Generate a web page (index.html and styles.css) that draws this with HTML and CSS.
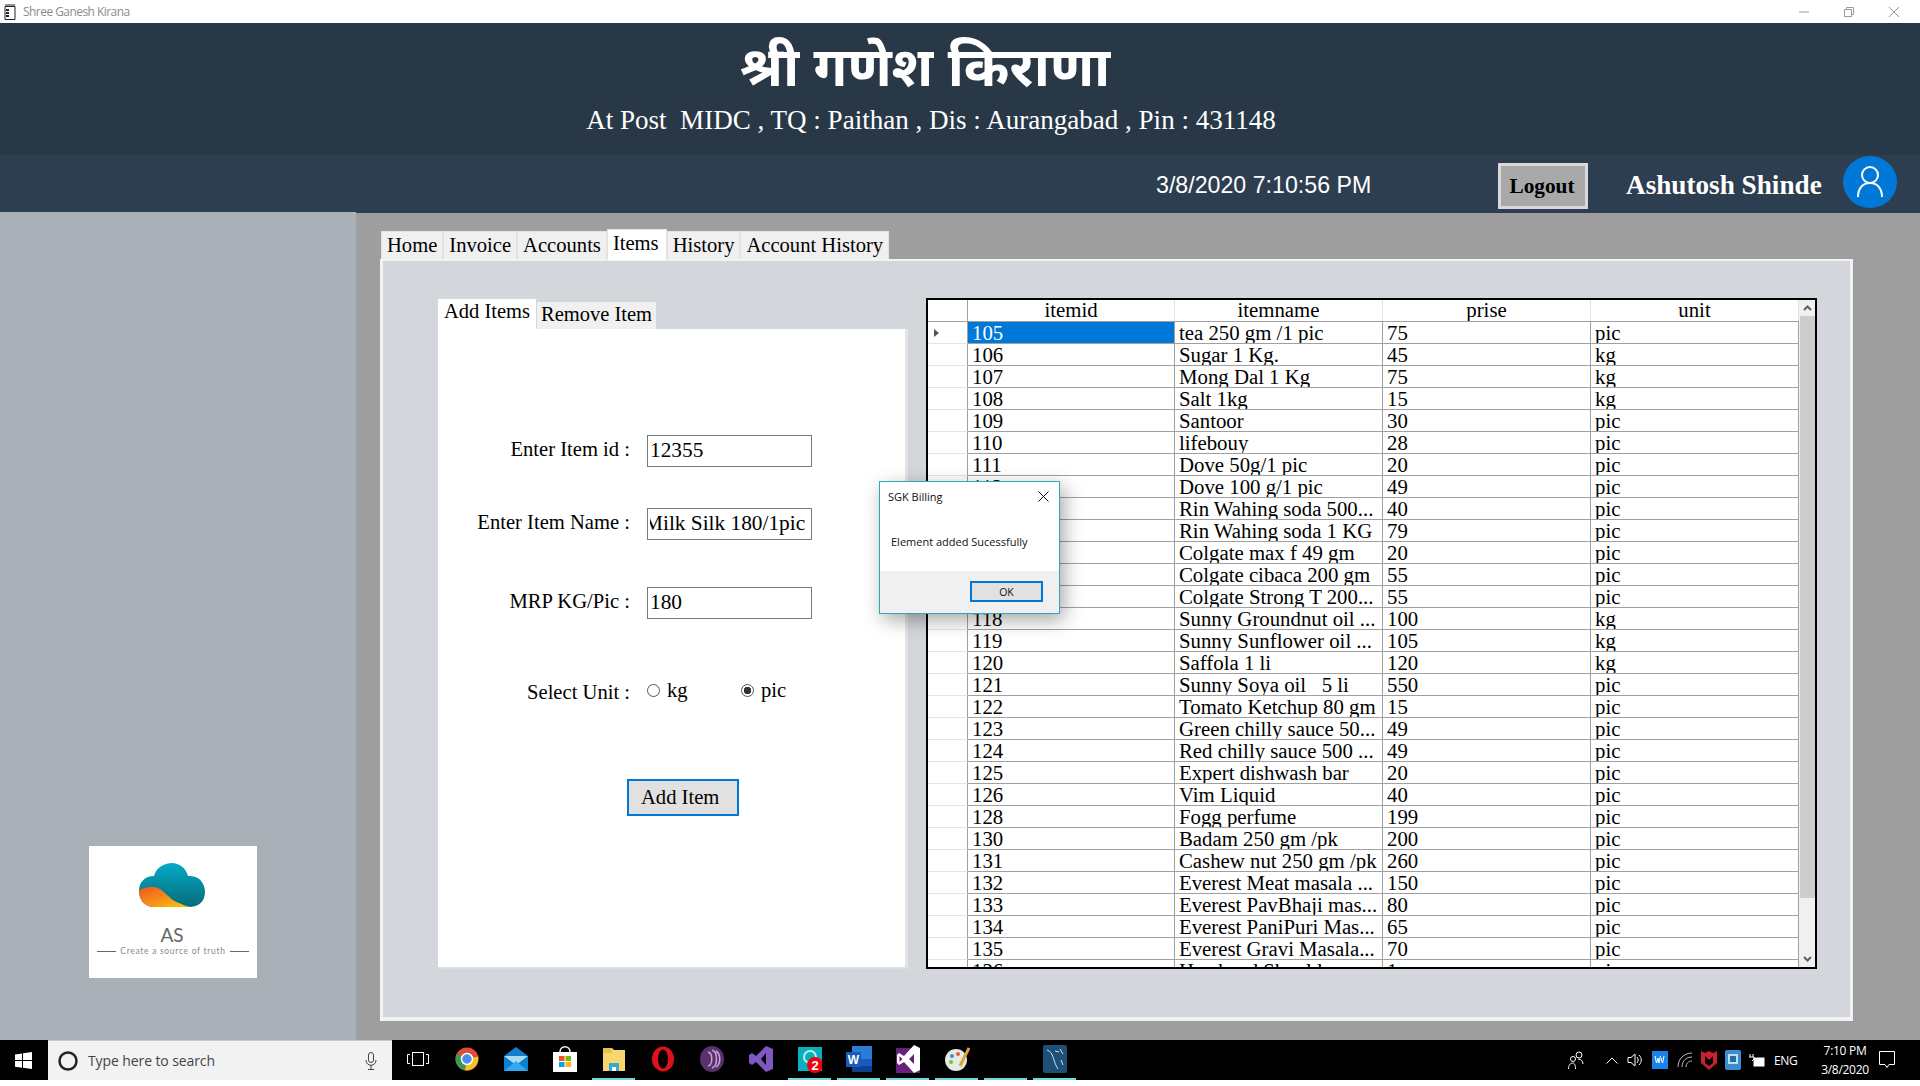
FILE: index.html

```html
<!DOCTYPE html>
<html>
<head>
  <title>Shree Ganesh Kirana</title>
  <link rel="stylesheet" href="styles.css">
</head>
<body>
  <div class="app">
    <div class="title-bar">
      <svg class="app-icon" width="12" height="16" viewBox="0 0 12 16"><path d="M1 2.5h10v13H1z" fill="#fff" stroke="#222"/><path d="M2 0v3M4 0v3M6 0v3M8 0v3M10 0v3" stroke="#222"/><path d="M2 6h3M2 9h3M2 12h3" stroke="#222" stroke-width="2"/></svg>
      <span class="app-name">Shree Ganesh Kirana</span>
      <div class="win-buttons">
        <svg width="10" height="10" viewBox="0 0 10 10"><path d="M0 5h10" stroke="#999"/></svg>
        <svg width="10" height="10" viewBox="0 0 10 10"><path d="M.5 2.5h7v7h-7zM2.5 2.5v-2h7v7h-2" fill="none" stroke="#999"/></svg>
        <svg width="10" height="10" viewBox="0 0 10 10"><path d="M0 0l10 10M10 0L0 10" stroke="#999"/></svg>
      </div>
    </div>

    <header class="shop-header">
      <h1 class="shop-name">श्री गणेश किराणा</h1>
      <p class="shop-address">At Post &nbsp;MIDC , TQ : Paithan , Dis : Aurangabad , Pin : 431148</p>
    </header>

    <div class="info-bar">
      <span class="clock">3/8/2020 7:10:56 PM</span>
      <button class="logout">Logout</button>
      <span class="user-name">Ashutosh Shinde</span>
      <div class="avatar">
        <svg width="28" height="34" viewBox="0 0 28 34" fill="none" stroke="#fff" stroke-width="2"><circle cx="14" cy="10" r="8"/><path d="M2 32c0-9 5-14 12-14s12 5 12 14"/></svg>
      </div>
    </div>

    <div class="main">
      <aside class="sidebar">
        <div class="logo-card">
          <svg class="cloud" width="68" height="46" viewBox="0 0 68 46">
            <defs>
              <linearGradient id="cloudBlue" x1="0" y1="0" x2="0" y2="1"><stop offset="0" stop-color="#06a9c9"/><stop offset="1" stop-color="#056c78"/></linearGradient>
              <linearGradient id="cloudFire" x1="0" y1="0" x2="1" y2="1"><stop offset="0" stop-color="#ee5522"/><stop offset="1" stop-color="#fdc70c"/></linearGradient>
            </defs>
            <path d="M1 29c0-9 6-15 15-15 2-8 10-13 18-13 7 0 14 5 16 13 10-1 17 6 17 16s-7 15-16 15H16C7 45 1 38 1 29z" fill="url(#cloudBlue)"/>
            <path d="M1 29c3-3 8-4 13-4 12 0 14 11 27 16 4 2 8 3 11 4H16C7 45 1 38 1 29z" fill="url(#cloudFire)"/>
          </svg>
          <span class="logo-as">AS</span>
          <div class="logo-tag"><i></i><span>Create a source of truth</span><i></i></div>
        </div>
      </aside>

      <section class="workspace">
        <nav class="tabs">
          <a class="tab">Home</a>
          <a class="tab">Invoice</a>
          <a class="tab">Accounts</a>
          <a class="tab tab-active">Items</a>
          <a class="tab">History</a>
          <a class="tab">Account History</a>
        </nav>
        <div class="panel">
          <div class="form-col">
            <div class="subtabs">
              <a class="subtab subtab-active">Add Items</a>
              <a class="subtab">Remove Item</a>
            </div>
            <div class="form-box">
              <div class="field field-id">
                <label>Enter Item id :</label>
                <input type="text" value="12355">
              </div>
              <div class="field field-name">
                <label>Enter Item Name :</label>
                <input type="text" class="input-long" value="Milk Silk 180/1pic">
              </div>
              <div class="field field-mrp">
                <label>MRP KG/Pic :</label>
                <input type="text" value="180">
              </div>
              <div class="field field-unit">
                <label>Select Unit :</label>
                <div class="radios">
                  <span class="radio"><i class="dot"></i>kg</span>
                  <span class="radio"><i class="dot dot-on"></i>pic</span>
                </div>
              </div>
              <button class="add-item">Add Item</button>
            </div>
          </div>

          <div class="grid">
            <div class="grid-body">
              <div class="row row-head"><div></div><div>itemid</div><div>itemname</div><div>prise</div><div>unit</div></div>
              <div class="row row-sel"><div class="arrow-cell"><svg width="7" height="10" viewBox="0 0 7 10"><path d="M1 1l5 4-5 4z" fill="#555"/></svg></div><div>105</div><div>tea 250 gm /1 pic</div><div>75</div><div>pic</div></div>
              <div class="row"><div></div><div>106</div><div>Sugar 1 Kg.</div><div>45</div><div>kg</div></div>
              <div class="row"><div></div><div>107</div><div>Mong Dal 1 Kg</div><div>75</div><div>kg</div></div>
              <div class="row"><div></div><div>108</div><div>Salt 1kg</div><div>15</div><div>kg</div></div>
              <div class="row"><div></div><div>109</div><div>Santoor</div><div>30</div><div>pic</div></div>
              <div class="row"><div></div><div>110</div><div>lifebouy</div><div>28</div><div>pic</div></div>
              <div class="row"><div></div><div>111</div><div>Dove 50g/1 pic</div><div>20</div><div>pic</div></div>
              <div class="row"><div></div><div>112</div><div>Dove 100 g/1 pic</div><div>49</div><div>pic</div></div>
              <div class="row"><div></div><div>113</div><div>Rin Wahing soda 500...</div><div>40</div><div>pic</div></div>
              <div class="row"><div></div><div>114</div><div>Rin Wahing soda 1 KG</div><div>79</div><div>pic</div></div>
              <div class="row"><div></div><div>115</div><div>Colgate max f 49 gm</div><div>20</div><div>pic</div></div>
              <div class="row"><div></div><div>116</div><div>Colgate cibaca 200 gm</div><div>55</div><div>pic</div></div>
              <div class="row"><div></div><div>117</div><div>Colgate Strong T 200...</div><div>55</div><div>pic</div></div>
              <div class="row"><div></div><div>118</div><div>Sunny Groundnut oil ...</div><div>100</div><div>kg</div></div>
              <div class="row"><div></div><div>119</div><div>Sunny Sunflower oil ...</div><div>105</div><div>kg</div></div>
              <div class="row"><div></div><div>120</div><div>Saffola 1 li</div><div>120</div><div>kg</div></div>
              <div class="row"><div></div><div>121</div><div>Sunny Soya oil &nbsp; 5 li</div><div>550</div><div>pic</div></div>
              <div class="row"><div></div><div>122</div><div>Tomato Ketchup 80 gm</div><div>15</div><div>pic</div></div>
              <div class="row"><div></div><div>123</div><div>Green chilly sauce 50...</div><div>49</div><div>pic</div></div>
              <div class="row"><div></div><div>124</div><div>Red chilly sauce 500 ...</div><div>49</div><div>pic</div></div>
              <div class="row"><div></div><div>125</div><div>Expert dishwash bar</div><div>20</div><div>pic</div></div>
              <div class="row"><div></div><div>126</div><div>Vim Liquid</div><div>40</div><div>pic</div></div>
              <div class="row"><div></div><div>128</div><div>Fogg perfume</div><div>199</div><div>pic</div></div>
              <div class="row"><div></div><div>130</div><div>Badam 250 gm /pk</div><div>200</div><div>pic</div></div>
              <div class="row"><div></div><div>131</div><div>Cashew nut 250 gm /pk</div><div>260</div><div>pic</div></div>
              <div class="row"><div></div><div>132</div><div>Everest Meat masala ...</div><div>150</div><div>pic</div></div>
              <div class="row"><div></div><div>133</div><div>Everest PavBhaji mas...</div><div>80</div><div>pic</div></div>
              <div class="row"><div></div><div>134</div><div>Everest PaniPuri Mas...</div><div>65</div><div>pic</div></div>
              <div class="row"><div></div><div>135</div><div>Everest Gravi Masala...</div><div>70</div><div>pic</div></div>
              <div class="row"><div></div><div>136</div><div>Head and Shoulders</div><div>1</div><div>pic</div></div>
            </div>
            <div class="scrollbar">
              <div class="scroll-btn"><svg width="9" height="6" viewBox="0 0 9 6"><path d="M1 5l3.5-3.5L8 5" fill="none" stroke="#606060" stroke-width="2"/></svg></div>
              <div class="scroll-thumb"></div>
              <div class="scroll-btn scroll-btn-end"><svg width="9" height="6" viewBox="0 0 9 6"><path d="M1 1l3.5 3.5L8 1" fill="none" stroke="#606060" stroke-width="2"/></svg></div>
            </div>
          </div>
        </div>
      </section>
    </div>

    <footer class="taskbar">
      <div class="start"><svg width="17" height="17" viewBox="0 0 17 17" fill="#fff"><path d="M0 2.4l7-1v6.700H0zM8 1.300L17 0v8.100H8zM0 9h7v6.700l-7-1zM8 9h9v8l-9-1.300z"/></svg></div>
      <div class="search">
        <svg width="22" height="22" viewBox="0 0 22 22"><circle cx="11" cy="11" r="8.500" fill="none" stroke="#222" stroke-width="2.500"/></svg>
        <span class="search-text">Type here to search</span>
        <svg class="mic" width="12" height="18" viewBox="0 0 12 18" fill="none" stroke="#444"><rect x="3.500" y=".5" width="5" height="10" rx="2.500"/><path d="M1 8c0 7 10 7 10 0M6 13v4M3 17.500h6"/></svg>
      </div>
      <div class="task-icons">
        <span class="task"><svg width="22" height="16" viewBox="0 0 22 16" fill="none" stroke="#fff"><rect x="5.500" y="1.500" width="11" height="13"/><path d="M3 3.500H.5v9H3M19 3.500h2.500v9H19"/></svg></span>
        <span class="task"><svg width="24" height="24" viewBox="0 0 24 24"><circle cx="12" cy="12" r="11.500" fill="#dd4b39"/><path d="M12 12L1.600 7A11.500 11.500 0 0 0 10 23.300z" fill="#3b9a4e"/><path d="M12 12l11-2.500A11.500 11.500 0 0 1 10 23.300z" fill="#f6c026"/><circle cx="12" cy="12" r="5.500" fill="#4a8df0" stroke="#fff" stroke-width="1.500"/></svg></span>
        <span class="task"><svg width="24" height="24" viewBox="0 0 24 24"><path d="M0 9L12 0l12 9v15H0z" fill="#0f7fd0"/><path d="M0 9h24L12 18z" fill="#a8dcf6"/><path d="M0 24L12 14l12 10z" fill="#33aaee"/></svg></span>
        <span class="task"><svg width="24" height="26" viewBox="0 0 24 26"><path d="M7 6c0-7 10-7 10 0" fill="none" stroke="#fff" stroke-width="1.500"/><path d="M0 6h24v20H0z" fill="#fff"/><path d="M6 10h5.500v5H6z" fill="#f25022"/><path d="M12.500 10H18v5h-5.500z" fill="#7fba00"/><path d="M6 16h5.500v5H6z" fill="#00a4ef"/><path d="M12.500 16H18v5h-5.500z" fill="#ffb900"/></svg></span>
        <span class="task task-run"><svg width="24" height="24" viewBox="0 0 24 24"><path d="M1 1h9l2 2h11v21H1z" fill="#f5d76e"/><path d="M1 1h9v5H1z" fill="#e8c04a"/><path d="M7 16h10v8H7z" fill="#38a7d8"/><path d="M10 20h4v4h-4z" fill="#fff"/></svg></span>
        <span class="task"><svg width="24" height="26" viewBox="0 0 24 26"><ellipse cx="12" cy="13" rx="11" ry="12.500" fill="#e0101e"/><ellipse cx="12" cy="13" rx="5" ry="9.500" fill="#000"/></svg></span>
        <span class="task"><svg width="24" height="26" viewBox="0 0 24 26" fill="none"><ellipse cx="12" cy="13" rx="12" ry="13" fill="#59316b"/><path d="M8 6c5 1 5 13 0 14M12 4c6 2 6 16 0 18M16 5c5 3 5 13 0 16" stroke="#c9a3de" stroke-width="1.500"/></svg></span>
        <span class="task"><svg width="24" height="26" viewBox="0 0 24 26"><path d="M17 0l7 3v20l-7 3L7 16l-4 3-3-2V9l3-2 4 3zM17 7l-5 6 5 6z" fill="#7e57c2"/></svg></span>
        <span class="task task-run"><svg width="24" height="28" viewBox="0 0 24 28"><path d="M0 2h24v24H0z" fill="#07b0bd"/><circle cx="12" cy="12" r="6" fill="none" stroke="#bfeee8" stroke-width="2"/><circle cx="17" cy="20" r="8" fill="#f00010"/><text class="badge-num" x="17" y="25">2</text></svg></span>
        <span class="task task-run"><svg width="26" height="26" viewBox="0 0 26 26"><path d="M6 0h20v26H6z" fill="#2b7cd3"/><path d="M6 13h20v7H6z" fill="#185abd"/><path d="M6 20h20v6H6z" fill="#103f91"/><path d="M0 6h15v15H0z" fill="#185abd"/><text class="word-w" x="7.500" y="18">W</text></svg></span>
        <span class="task task-run"><svg width="24" height="28" viewBox="0 0 24 28"><path d="M0 3h24v25H0z" fill="#68217a"/><path d="M18 0l6 3v22l-6 3L8 17l-5 3-2-2V10l2-2 5 3zM18 9l-5 5 5 5zM3.500 11v6l3-3z" fill="#fff"/></svg></span>
        <span class="task task-run"><svg width="26" height="26" viewBox="0 0 26 26"><ellipse cx="12" cy="14" rx="11" ry="11" fill="#e4ebe2"/><circle cx="8" cy="10" r="2" fill="#3b8be0"/><circle cx="14" cy="8" r="2" fill="#e25d3a"/><circle cx="7" cy="16" r="2" fill="#7dbf4f"/><path d="M16 20L25 2" stroke="#e2a23a" stroke-width="3"/></svg></span>
        <span class="task task-run"></span>
        <span class="task task-run"><svg width="24" height="28" viewBox="0 0 24 28"><rect width="24" height="28" rx="2" fill="#1e4f77"/><path d="M4 5c7 2 6 12 11 19M17 4l3 5M12 6l4 1M18 15l2 5" fill="none" stroke="#cfe3f1"/></svg></span>
      </div>
      <div class="tray">
        <svg class="tray-person" width="16" height="20" viewBox="0 0 16 20" fill="none" stroke="#fff"><circle cx="11" cy="5" r="3"/><circle cx="5" cy="9" r="2.500"/><path d="M.5 19c0-4 2-6 4-6s3 2 3 6M10 9c3 0 5 2 5 5"/></svg>
        <svg class="tray-chev" width="12" height="7" viewBox="0 0 12 7" fill="none" stroke="#fff"><path d="M.5 6.500L6 1l5.500 5.500"/></svg>
        <svg class="tray-sound" width="16" height="16" viewBox="0 0 16 16" fill="none" stroke="#fff"><path d="M1 5.500h3L8 2v12l-4-3.500H1zM10 5c1.500 2 1.500 4 0 6M12 3c3 3 3 7 0 10"/></svg>
        <svg class="tray-wave" width="16" height="18" viewBox="0 0 16 18"><path d="M0 0h16v18H0z" fill="#1784ec"/><path d="M3 5l1.500 7L6 7l1 5 1.500-7M9 7l1.500 5L12 5" fill="none" stroke="#fff"/></svg>
        <svg class="tray-wifi" width="16" height="16" viewBox="0 0 16 16" fill="none" stroke="#bbb"><path d="M1 15c0-8 6-14 14-14M5 15c0-6 4-10 10-10M9 15c0-3 2-6 6-6"/></svg>
        <svg class="tray-shield" width="16" height="20" viewBox="0 0 16 20"><path d="M0 1l4 2 4-2 4 2 4-2v12l-8 7-8-7z" fill="#c8202c"/><path d="M4 6v7l4 3 4-3V6l-4 4z" fill="#000"/></svg>
        <svg class="tray-intel" width="16" height="20" viewBox="0 0 16 20"><rect width="16" height="20" rx="2" fill="#3a8ed0"/><rect x="3" y="4" width="10" height="10" fill="#bde0f0"/><rect x="5" y="6" width="6" height="6" fill="#1d6fa8"/></svg>
        <svg class="tray-power" width="16" height="14" viewBox="0 0 16 14" fill="none" stroke="#fff"><path d="M1 1v3M4 1v3M0 4h5v2l-2 2"/><rect x="5" y="5" width="10" height="8" fill="#fff"/></svg>
        <span class="tray-lang">ENG</span>
        <div class="tray-clock"><span>7:10 PM</span><span>3/8/2020</span></div>
        <svg class="tray-note" width="16" height="18" viewBox="0 0 16 18" fill="none" stroke="#fff"><path d="M.5.5h15v13H10l-2 3-2-3H.5z"/></svg>
      </div>
    </footer>

    <div class="dialog">
      <div class="dialog-top">
        <span>SGK Billing</span>
        <svg width="11" height="11" viewBox="0 0 11 11"><path d="M.5.5l10 10M10.500.5l-10 10" stroke="#111"/></svg>
      </div>
      <p class="dialog-msg">Element added Sucessfully</p>
      <div class="dialog-foot"><button class="dialog-ok">OK</button></div>
    </div>
  </div>
</body>
</html>
```

FILE: styles.css

```css
* {
  box-sizing: border-box;
}

body {
  margin: 0;
  background: #fff;
  font-family: "Liberation Serif", "Times New Roman", serif;
  color: #000;
}

.app {
  position: relative;
  width: 1920px;
  height: 1086px;
  display: flex;
  flex-direction: column;
  overflow: hidden;
}

/* window chrome */
.title-bar {
  height: 23px;
  display: flex;
  align-items: center;
  padding-left: 4px;
  background: #fff;
}

.app-icon {
  margin-right: 7px;
}

.app-name {
  font-family: "Open Sans", sans-serif;
  font-size: 12px;
  letter-spacing: -0.55px;
  color: #8c8c8c;
}

.win-buttons {
  margin-left: auto;
  display: flex;
  gap: 35px;
  padding-right: 21px;
}

/* header */
.shop-header {
  height: 132px;
  background: #293847;
  color: #fff;
  text-align: center;
  padding-right: 70px;
}

.shop-name {
  margin: 0;
  padding-top: 17px;
  font-family: "Noto Sans Devanagari", "Lohit Devanagari", "Noto Sans", sans-serif;
  font-size: 55px;
  line-height: 66px;
  font-weight: bold;
}

.shop-address {
  margin: -2px 0 0;
  padding-left: 12px;
  font-size: 27.050px;
  line-height: 32px;
}

.info-bar {
  height: 58px;
  background: #2d3e50;
  display: flex;
  align-items: flex-start;
  color: #fff;
}

.clock {
  margin: 17px 0 0 1156px;
  width: 342px;
  font-family: "Liberation Sans", Arial, sans-serif;
  font-size: 23.200px;
  line-height: 26px;
}

.logout {
  width: 90px;
  height: 46px;
  margin-top: 8px;
  border: 3px solid #d9d9d9;
  background: #a9a9a9;
  font-family: "Liberation Serif", serif;
  font-size: 21.330px;
  font-weight: bold;
  color: #000;
  padding: 0 2px 0 0;
}

.user-name {
  margin: 14px 0 0 38px;
  width: 217px;
  font-size: 27.200px;
  line-height: 32px;
  font-weight: bold;
}

.avatar {
  width: 54px;
  height: 52px;
  margin-top: 1px;
  border-radius: 50%;
  background: #0078d7;
  display: flex;
  align-items: center;
  justify-content: center;
}

/* main area */
.main {
  height: 827px;
  display: flex;
  background: #9e9e9e;
}

.sidebar {
  width: 356px;
  height: 828px;
  margin-top: -1px;
  background: #a9b0b8;
  padding: 634px 0 0 89px;
}

.logo-card {
  width: 168px;
  height: 132px;
  background: #fff;
  display: flex;
  flex-direction: column;
  align-items: center;
  padding-top: 16px;
  color: #666;
}

.cloud {
  margin-right: 2px;
}

.logo-as {
  margin: 16px 2px 0 0;
  font-family: "Lato", sans-serif;
  font-size: 19px;
  line-height: 22px;
}

.logo-tag {
  display: flex;
  align-items: center;
  gap: 4px;
  font-family: "Lato", sans-serif;
  font-size: 8.500px;
  letter-spacing: 0.7px;
  line-height: 11px;
  color: #8a8a8a;
}

.logo-tag i {
  width: 19px;
  height: 1px;
  background: #666;
}

.workspace {
  flex: 1;
  padding: 16px 0 0 24px;
}

.tabs {
  height: 30px;
  margin-left: 1px;
  display: flex;
  align-items: flex-end;
}

.tab {
  height: 28px;
  padding: 0 5px;
  background: #f0f0f0;
  border: 1px solid #e3e3e3;
  border-bottom: 0;
  font-size: 20.600px;
  line-height: 27px;
}

.tab-active {
  height: 31px;
  margin-bottom: -1px;
  position: relative;
  background: #fff;
  padding: 0 7px 0 5px;
  line-height: 26px;
}

.panel {
  width: 1473px;
  height: 762px;
  background: #d3d6db;
  border: 3px solid #f3f3f3;
  border-top-width: 2px;
  border-bottom-width: 4px;
  padding: 37px 0 0 55px;
  display: flex;
  align-items: flex-start;
}

.form-col {
  width: 471px;
  margin: 1px 17px 0 0;
}

.subtabs {
  display: flex;
  align-items: flex-end;
  height: 30px;
}

.subtab {
  height: 27px;
  padding: 0 4px 0 4px;
  margin-left: 1px;
  background: #f0f0f0;
  font-size: 20.500px;
  line-height: 24px;
  white-space: nowrap;
}

.subtab-active {
  height: 30px;
  width: 98px;
  margin-left: 0;
  padding-left: 6px;
  background: #fff;
  line-height: 24px;
}

.form-box {
  width: 470px;
  height: 640px;
  background: #fff;
  border-right: 3px solid #e3e4e6;
  border-bottom: 2px solid #dcdee0;
  padding-top: 106px;
  display: flex;
  flex-direction: column;
}

.field {
  display: flex;
  align-items: flex-start;
  gap: 17px;
  font-size: 20.600px;
}

.field label {
  width: 192px;
  text-align: right;
  line-height: 28px;
}

.field input {
  width: 165px;
  height: 32px;
  border: 1px solid #7a7a7a;
  padding: 0 2px 2px 2px;
  font-family: inherit;
  font-size: 21.330px;
  color: #000;
  background: #fff;
  outline: 0;
}

.input-long {
  text-indent: -6px;
}

.field-name {
  margin-top: 41px;
}

.field-mrp {
  margin-top: 47px;
}

.field-unit {
  margin-top: 58px;
}

.field-unit label {
  padding-top: 1px;
}

.radios {
  display: flex;
  margin-top: -1px;
}

.radio {
  width: 94px;
  display: flex;
  align-items: center;
  line-height: 28px;
}

.dot {
  width: 13px;
  height: 13px;
  margin-right: 7px;
  border: 1px solid #555;
  border-radius: 50%;
  background: #fff;
}

.dot-on {
  background: radial-gradient(circle, #333 0 3.500px, #fff 4px);
}

.add-item {
  width: 112px;
  height: 37px;
  margin: 73px 0 0 189px;
  border: 2px solid #0078d7;
  background: #e1e1e1;
  font-family: inherit;
  font-size: 20.600px;
  text-align: left;
  padding: 0 0 0 12px;
}

/* data grid */
.grid {
  width: 891px;
  height: 671px;
  border: 2px solid #000;
  background: #fff;
  display: flex;
}

.grid-body {
  width: 871px;
  height: 667px;
  overflow: hidden;
}

.row {
  display: grid;
  grid-template-columns: 40px 207px 208px 208px 208px;
  height: 22px;
  border-bottom: 1px solid #a0a0a0;
  font-size: 20.800px;
  line-height: 21px;
}

.row > div {
  overflow: hidden;
  white-space: nowrap;
  padding-left: 4px;
  border-right: 1px solid #a0a0a0;
}

.row > div:first-child {
  position: relative;
  z-index: 1;
  margin-bottom: -1px;
  background: #fff;
  border-bottom: 1px solid #e4e4e4;
}

.row-head {
  text-align: center;
  line-height: 19px;
}

.row-head > div {
  padding-left: 0;
  border-right-color: #e4e4e4;
}

.row-head > div:first-child {
  border-bottom: 0;
  border-right-color: #a0a0a0;
  margin-bottom: 0;
}

.row-sel > div:nth-child(2) {
  background: #0078d7;
  color: #fff;
}

.row > .arrow-cell {
  padding: 6px 0 0 5px;
  line-height: 0;
}

.scrollbar {
  width: 16px;
  height: 667px;
  background: #f0f0f0;
  display: flex;
  flex-direction: column;
}

.scroll-btn {
  height: 16px;
  display: flex;
  align-items: center;
  justify-content: center;
}

.scroll-btn-end {
  margin-top: auto;
}

.scroll-thumb {
  height: 582px;
  margin-left: 1px;
  background: #cdcdcd;
}

/* taskbar */
.taskbar {
  height: 40px;
  background: #000;
  display: flex;
  align-items: center;
}

.start {
  width: 48px;
  padding-left: 15px;
  display: flex;
  align-items: center;
}

.search {
  width: 344px;
  height: 40px;
  background: #f2f2f2;
  display: flex;
  align-items: center;
  padding-left: 9px;
  border-top: 1px solid #c8c8c8;
}

.search-text {
  margin-left: 9px;
  font-family: "Open Sans", sans-serif;
  font-size: 14px;
  letter-spacing: -0.1px;
  color: #444;
}

.mic {
  margin-left: auto;
  margin-right: 15px;
}

.task-icons {
  display: flex;
  margin-left: 1px;
}

.task {
  width: 49px;
  height: 40px;
  display: flex;
  align-items: center;
  justify-content: center;
  border-bottom: 2px solid transparent;
}

.task-run {
  border-image: linear-gradient(90deg, transparent 10%, #76d5e5 10%, #76d5e5 90%, transparent 90%) 2;
}

.badge-num {
  font-family: "Liberation Sans", sans-serif;
  font-size: 13px;
  font-weight: bold;
  fill: #fff;
  text-anchor: middle;
}

.word-w {
  font-family: "Liberation Sans", sans-serif;
  font-size: 12px;
  font-weight: bold;
  fill: #fff;
  text-anchor: middle;
}

.tray {
  margin-left: auto;
  height: 40px;
  display: flex;
  align-items: center;
  color: #fff;
  padding-right: 25px;
}

.tray svg {
  flex: none;
}

.tray-chev {
  margin-left: 22px;
}

.tray-sound {
  margin-left: 9px;
}

.tray-wave {
  margin-left: 9px;
}

.tray-wifi {
  margin-left: 9px;
}

.tray-shield {
  margin-left: 8px;
}

.tray-intel {
  margin-left: 8px;
}

.tray-power {
  margin-left: 8px;
}

.tray-lang {
  margin-left: 9px;
  width: 37px;
  font-family: "Open Sans", sans-serif;
  font-size: 12px;
  letter-spacing: -0.4px;
}

.tray-clock {
  width: 68px;
  display: flex;
  flex-direction: column;
  align-items: center;
  gap: 3px;
  font-family: "Open Sans", sans-serif;
  font-size: 12px;
  letter-spacing: -0.3px;
  line-height: 16px;
}

/* message box over the form */
.dialog {
  position: absolute;
  z-index: 5;
  left: 879px;
  top: 481px;
  width: 181px;
  height: 133px;
  background: #fff;
  border: 1px solid #2aa7ba;
  box-shadow: 4px 6px 18px rgba(0, 0, 0, 0.35);
  font-family: "Open Sans", sans-serif;
  font-size: 11px;
  color: #111;
  display: flex;
  flex-direction: column;
}

.dialog-top {
  height: 29px;
  display: flex;
  align-items: center;
  justify-content: space-between;
  padding: 0 10px 0 8px;
}

.dialog-msg {
  margin: 24px 0 0 11px;
  line-height: 14px;
}

.dialog-foot {
  margin-top: auto;
  height: 42px;
  background: #f0f0f0;
  padding: 10px 16px 0 0;
  display: flex;
  justify-content: flex-end;
}

.dialog-ok {
  width: 73px;
  height: 21px;
  padding: 0;
  border: 2px solid #0078d7;
  background: #e1e1e1;
  font-family: inherit;
  font-size: 10.500px;
  color: #111;
}
```
